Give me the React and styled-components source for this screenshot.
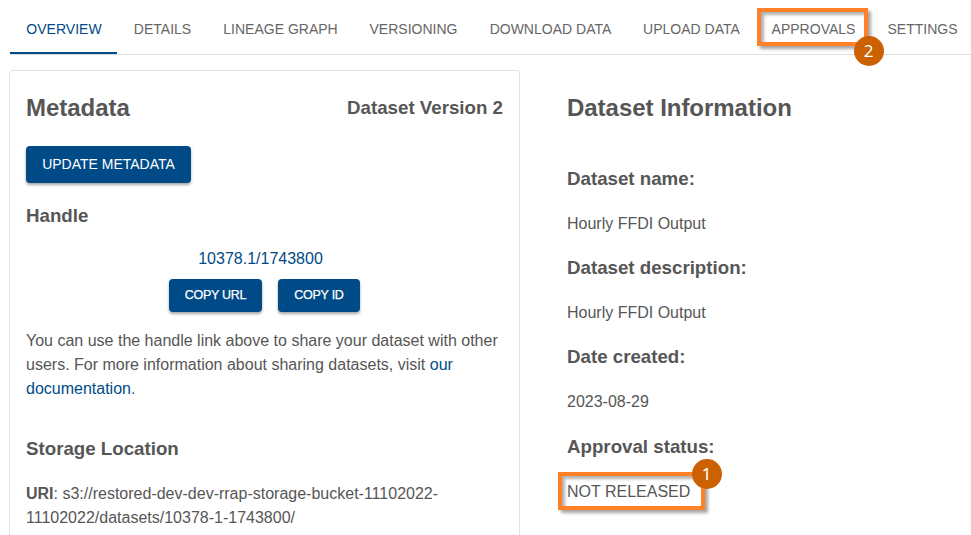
import React from "react";
import styled, { createGlobalStyle } from "styled-components";

const Global = createGlobalStyle`
  * { box-sizing: border-box; }
  body { margin: 0; background: #fff; overflow: hidden; }
`;
const Page = styled.div`
  width: 971px;
  height: 535px;
  overflow: hidden;
  padding-left: 9px;
  font: 16px/24px "Liberation Sans", Arial, sans-serif;
  color: #565656;
`;
const Tabs = styled.nav`
  display: flex;
  height: 55px;
  margin-left: 1px;
  border-bottom: 1px solid #dedee0;
`;
const Tab = styled.div`
  flex: none;
  position: relative;
  width: ${(p) => p.$w}px;
  height: 54px;
  padding: 17px 0 0 1px;
  text-align: center;
  font-size: 14px;
  letter-spacing: 0.01px;
  white-space: nowrap;
  color: ${(p) => (p.$active ? "#004b87" : "#666")};
  border-bottom: ${(p) => (p.$active ? "2px solid #004b87" : "none")};
`;
const Highlight = styled.div`
  position: absolute;
  left: ${(p) => p.$x}px;
  top: ${(p) => p.$y}px;
  width: ${(p) => p.$w}px;
  height: 38px;
  border: 4px solid #ff8127;
  box-shadow: 3px 3px 3px rgba(0, 0, 0, 0.35), inset 3px 3px 3px rgba(0, 0, 0, 0.3);
`;
const Badge = styled.div`
  position: absolute;
  right: ${(p) => (p.$top ? -20.5 : -19.5)}px;
  ${(p) => (p.$top ? "top: -17px" : "bottom: -23.5px")};
  width: 30px;
  height: 30px;
  border-radius: 50%;
  background: #cb6100;
  color: #fff;
  font: 17px/29px "Noto Sans", sans-serif;
  text-align: center;
`;
const Columns = styled.main`
  display: flex;
  gap: 47px;
  padding-top: 15px;
`;
const Card = styled.section`
  width: 511px;
  height: 500px;
  padding: 15px 16px;
  border: 1px solid #e2e2ec;
  border-radius: 3px;
`;
const Header = styled.header`
  display: flex;
  justify-content: space-between;
  height: ${(p) => p.$h}px;
`;
const Title = styled.h2`
  margin: 0;
  padding-top: 10px;
  font-size: 24px;
  letter-spacing: -0.03px;
  line-height: 24px;
`;
const Heading = styled.h3`
  margin: ${(p) => p.$mt || 0}px 0 0;
  font-size: 18.72px;
  line-height: 24px;
`;
const Button = styled.button`
  display: block;
  width: ${(p) => p.$w}px;
  height: ${(p) => (p.$small ? 33 : 37)}px;
  padding: 0 0 2px;
  border: 0;
  border-radius: 4px;
  background: #004b87;
  color: #fff;
  font: ${(p) => (p.$small ? 12.5 : 14)}px "Liberation Sans", Arial, sans-serif;
  letter-spacing: ${(p) => (p.$small ? -0.27 : 0)}px;
  -webkit-text-stroke: ${(p) => (p.$small ? 0.25 : 0)}px #fff;
  box-shadow: 0 2px 3px rgba(0, 0, 0, 0.35);
`;
const Handle = styled.div`
  margin-top: 19px;
  padding-right: 8px;
  text-align: center;
  color: #004b87;
`;
const Actions = styled.div`
  display: flex;
  justify-content: center;
  gap: 16px;
  margin-top: 8px;
`;
const Copy = styled.p`
  margin: ${(p) => p.$mt}px 0 0;
  white-space: nowrap;
`;
const Link = styled.span`
  color: #004b87;
`;
const Info = styled.section`
  padding-top: 16px;
`;
const Field = styled.div`
  height: 89.4px;
`;
const Value = styled.p`
  position: relative;
  margin: 21px 0 0;
`;
const tabs = [
  ["OVERVIEW", 107], ["DETAILS", 90], ["LINEAGE GRAPH", 146],
  ["VERSIONING", 120], ["DOWNLOAD DATA", 154], ["UPLOAD DATA", 128],
  ["APPROVALS", 116], ["SETTINGS", 102],
];
const fields = [
  ["Dataset name:", "Hourly FFDI Output"],
  ["Dataset description:", "Hourly FFDI Output"],
  ["Date created:", "2023-08-29"],
  ["Approval status:", "NOT RELEASED"],
];

export default function App() {
  return (
    <Page>
      <Global />
      <Tabs>
        {tabs.map(([t, w], i) => (
          <Tab key={t} $w={w} $active={i === 0}>
            {t}
            {t === "APPROVALS" && (
              <Highlight $x={2} $y={8} $w={111}><Badge>2</Badge></Highlight>
            )}
          </Tab>
        ))}
      </Tabs>
      <Columns>
        <Card>
          <Header $h={60}><Title>Metadata</Title><Heading $mt={10}>Dataset Version 2</Heading></Header>
          <Button $w={165}>UPDATE METADATA</Button>
          <Heading $mt={21}>Handle</Heading>
          <Handle>10378.1/1743800</Handle>
          <Actions><Button $small $w={93}>COPY URL</Button><Button $small $w={82}>COPY ID</Button></Actions>
          <Copy $mt={17}>
            You can use the handle link above to share your dataset with other<br />
            users. For more information about sharing datasets, visit <Link>our<br />documentation</Link>.
          </Copy>
          <Heading $mt={36}>Storage Location</Heading>
          <Copy $mt={21}>
            <b>URI</b>: s3://restored-dev-dev-rrap-storage-bucket-11102022-<br />
            11102022/datasets/10378-1-1743800/
          </Copy>
        </Card>
        <Info>
          <Header $h={80.7}><Title>Dataset Information</Title></Header>
          {fields.map(([label, value]) => (
            <Field key={label}>
              <Heading>{label}</Heading>
              <Value>
                {value}
                {value === "NOT RELEASED" && (
                  <Highlight $x={-9} $y={-8} $w={147}><Badge $top>1</Badge></Highlight>
                )}
              </Value>
            </Field>
          ))}
        </Info>
      </Columns>
    </Page>
  );
}
